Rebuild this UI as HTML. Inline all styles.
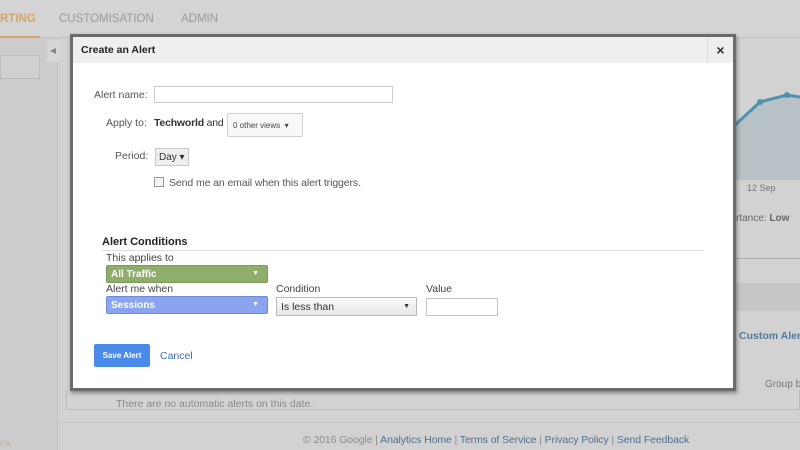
<!DOCTYPE html>
<html><head><meta charset="utf-8"><style>
*{box-sizing:border-box;margin:0;padding:0}
body{width:800px;height:450px;overflow:hidden;background:#d2d2d2;font-family:"Liberation Sans",Arial,sans-serif;font-size:11px;color:#333;position:relative}
.a{position:absolute;white-space:nowrap}
</style></head><body>
<div class="a" style="left:0;top:0;width:800px;height:38px;background:#d4d4d4;border-bottom:1px solid #c4c4c4"></div>
<div class="a" style="left:0;top:13px;font-size:11.5px;color:#d6a66a;font-weight:bold">RTING</div>
<div class="a" style="left:0;top:36px;width:40px;height:2px;background:#d6a66a"></div>
<div class="a" style="left:59px;top:13px;font-size:11.5px;color:#9a9a9a">CUSTOMISATION</div>
<div class="a" style="left:181px;top:13px;font-size:11.5px;color:#9a9a9a">ADMIN</div>
<div class="a" style="left:0;top:38px;width:58px;height:412px;background:#cccccc;border-right:1px solid #c2c2c2"></div>
<div class="a" style="left:0;top:55px;width:40px;height:24px;border:1px solid #bdbdbd;background:#d0d0d0"></div>
<div class="a" style="left:47px;top:40px;width:12px;height:22px;background:#d6d6d6;color:#888;font-size:8px;text-align:center;line-height:22px">◀</div>
<div class="a" style="left:0;top:442px;font-size:6px;color:#d6a66a">FTA</div>
<svg class="a" style="left:735px;top:85px" width="65" height="95"><path d="M0 40 L25 17 L52 10 L65 12 L65 95 L0 95Z" fill="#b8c2c6"/><path d="M0 40 L25 17 L52 10 L65 12" stroke="#4d92b0" stroke-width="3" fill="none"/><circle cx="25" cy="17" r="3" fill="#4d92b0"/><circle cx="52" cy="10" r="3" fill="#4d92b0"/></svg>
<div class="a" style="left:747px;top:183px;font-size:9px;color:#777">12 Sep</div>
<div class="a" style="left:736px;top:213px;font-size:10px;color:#666">rtance: <b>Low</b></div>
<div class="a" style="left:735px;top:258px;width:65px;height:1px;background:#aaa"></div>
<div class="a" style="left:735px;top:283px;width:65px;height:28px;background:#c6c6c6"></div>
<div class="a" style="left:739px;top:330px;font-size:10.5px;color:#4d7a9a;font-weight:bold">Custom Alert</div>
<div class="a" style="left:765px;top:379px;font-size:10px;color:#777">Group by</div>
<div class="a" style="left:66px;top:390px;width:734px;height:20px;border:1px solid #bdbdbd;border-top:none"></div>
<div class="a" style="left:116px;top:398px;font-size:10.5px;color:#8a8a8a">There are no automatic alerts on this date.</div>
<div class="a" style="left:58px;top:422px;width:742px;height:1px;background:#c2c2c2"></div>
<div class="a" style="left:303px;top:434px;font-size:10.5px;color:#8a8a8a;letter-spacing:-0.1px">© 2016 Google | <span style="color:#4e6f8f">Analytics Home</span> | <span style="color:#4e6f8f">Terms of Service</span> | <span style="color:#4e6f8f">Privacy Policy</span> | <span style="color:#4e6f8f">Send Feedback</span></div>
<div class="a" style="left:70px;top:34px;width:666px;height:357px;border:3px solid #6b6b6b;background:#fff;box-shadow:1px 2px 4px rgba(0,0,0,.4)">
 <div style="height:26px;background:#efefef;position:relative">
  <div class="a" style="left:8px;top:7px;font-size:10.5px;font-weight:bold;color:#222">Create an Alert</div>
  <div class="a" style="right:0;top:0;width:26px;height:26px;border-left:1px solid #ddd;text-align:center;line-height:26px;font-size:14px;font-weight:bold;color:#333">×</div>
 </div>
</div>
<div class="a" style="left:94px;top:89px;font-size:10.5px;color:#555">Alert name:</div>
<div class="a" style="left:154px;top:86px;width:239px;height:17px;border:1px solid #ccc"></div>
<div class="a" style="left:106px;top:117px;font-size:10.5px;color:#555">Apply to:</div>
<div class="a" style="left:154px;top:117px;font-size:10.5px;color:#333;letter-spacing:-0.2px"><b>Techworld</b> and</div>
<div class="a" style="left:227px;top:113px;width:76px;height:24px;border:1px solid #d0d0d0;border-radius:2px;background:#f8f8f8;font-size:8px;color:#444;padding:7px 0 0 5px">0 other views &nbsp;▾</div>
<div class="a" style="left:115px;top:150px;font-size:10.5px;color:#555">Period:</div>
<div class="a" style="left:155px;top:148px;width:34px;height:18px;border:1px solid #c8c8c8;background:#eee;font-size:10px;color:#333;padding:3px 0 0 3px">Day ▾</div>
<div class="a" style="left:154px;top:177px;width:10px;height:10px;border:1px solid #999;background:#f4f4f4"></div>
<div class="a" style="left:169px;top:177px;font-size:10.5px;color:#555;letter-spacing:-0.1px">Send me an email when this alert triggers.</div>
<div class="a" style="left:102px;top:236px;font-size:11px;font-weight:bold;color:#222">Alert Conditions</div>
<div class="a" style="left:102px;top:250px;width:602px;height:1px;background:#ddd"></div>
<div class="a" style="left:106px;top:252px;font-size:10.5px;color:#444">This applies to</div>
<div class="a" style="left:106px;top:265px;width:162px;height:18px;background:#8fae6b;border:1px solid #7a9a58;border-radius:2px;color:#fff;font-weight:bold;font-size:10px;padding:3px 0 0 4px">All Traffic<span style="position:absolute;right:8px;font-size:7px;top:4px">▼</span></div>
<div class="a" style="left:106px;top:283px;font-size:10.5px;color:#444">Alert me when</div>
<div class="a" style="left:276px;top:283px;font-size:10.5px;color:#444">Condition</div>
<div class="a" style="left:426px;top:283px;font-size:10.5px;color:#444">Value</div>
<div class="a" style="left:106px;top:296px;width:162px;height:18px;background:#8aa5f0;border:1px solid #6f8ad6;border-radius:2px;color:#fff;font-weight:bold;font-size:10px;padding:3px 0 0 4px">Sessions<span style="position:absolute;right:8px;font-size:7px;top:4px">▼</span></div>
<div class="a" style="left:276px;top:297px;width:141px;height:19px;background:linear-gradient(#fafafa,#e6e6e6);border:1px solid #bbb;font-size:10.5px;color:#333;padding:3px 0 0 4px">Is less than<span style="position:absolute;right:6px;font-size:7px;top:5px">▼</span></div>
<div class="a" style="left:426px;top:298px;width:72px;height:18px;border:1px solid #c4c4c4"></div>
<div class="a" style="left:94px;top:344px;width:56px;height:23px;background:#4a8ae8;border-radius:2px;color:#fff;font-weight:bold;font-size:8px;text-align:center;line-height:23px">Save Alert</div>
<div class="a" style="left:160px;top:350px;font-size:10.5px;color:#3a6fb0">Cancel</div>
</body></html>
